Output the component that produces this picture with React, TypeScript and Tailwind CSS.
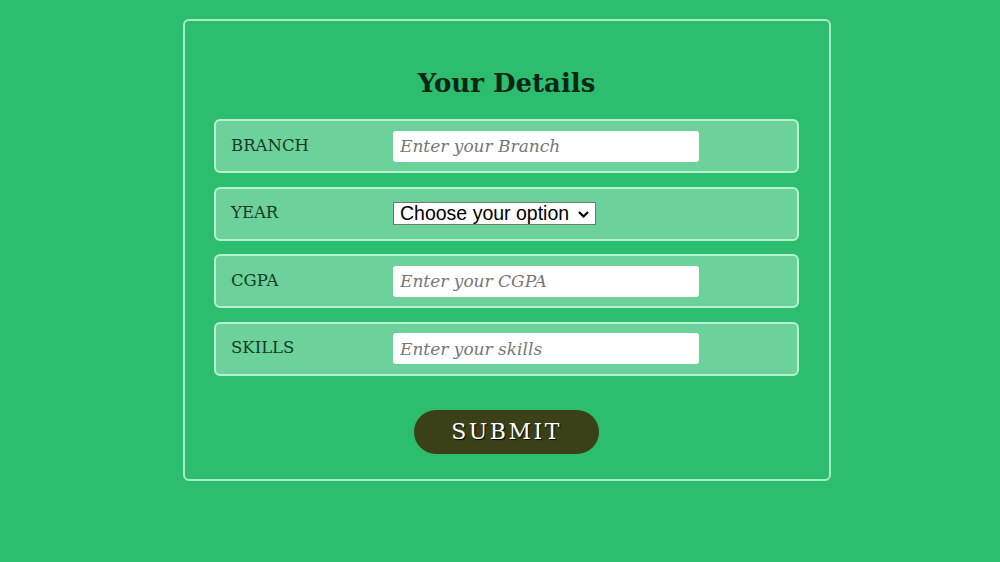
import React from "react";

const rows = [
  { label: "BRANCH", placeholder: "Enter your Branch" },
  { label: "YEAR", select: true },
  { label: "CGPA", placeholder: "Enter your CGPA" },
  { label: "SKILLS", placeholder: "Enter your skills" },
];

export default function App() {
  return (
    <div className="w-[1000px] h-[562px] bg-[#2dbd6f] pt-[19px] flex justify-center" style={{ fontFamily: "'DejaVu Serif', Georgia, serif" }}>
      <div className="w-[648px] h-[462px] ml-[13px] border-2 border-[#a9ecc6] rounded-[6px] flex flex-col items-center pt-[46px]">
        <h1 className="text-[26px] font-bold text-[#0c2615] leading-[32px] mb-[20px]">Your Details</h1>
        <div className="flex flex-col gap-[13.5px] w-[585px]">
          {rows.map((r) => (
            <div key={r.label} className="h-[54px] bg-[#6dd19b] border-2 border-[#b5f3cf] rounded-[6px] flex items-center pl-[15px]">
              <span className="w-[162px] text-[16.5px] text-[#173a24]">{r.label}</span>
              {r.select ? (
                <div className="relative h-[23px] w-[203px] bg-white border border-[#767676] flex items-center pl-[6px]">
                  <span className="text-[19.5px] text-black leading-none" style={{ fontFamily: "'Liberation Sans', Arial, sans-serif" }}>Choose your option</span>
                  <svg className="absolute right-[5px] top-[7px]" width="13" height="9" viewBox="0 0 13 9">
                    <path d="M2 2 L6.5 6.5 L11 2" stroke="#000" strokeWidth="2.2" fill="none" />
                  </svg>
                </div>
              ) : (
                <input
                  className="h-[31px] w-[306px] bg-white rounded-[3px] px-[7px] text-[17px] italic text-[#333] placeholder:text-[#777] outline-none"
                  placeholder={r.placeholder}
                  style={{ fontFamily: "'DejaVu Serif', Georgia, serif" }}
                />
              )}
            </div>
          ))}
        </div>
        <button
          className="mt-[34px] w-[185px] h-[44px] rounded-full bg-[#3a4117] text-white text-[22px] tracking-[2.5px]"
          style={{ textShadow: "1px 1px 1px #000" }}
        >
          SUBMIT
        </button>
      </div>
    </div>
  );
}
